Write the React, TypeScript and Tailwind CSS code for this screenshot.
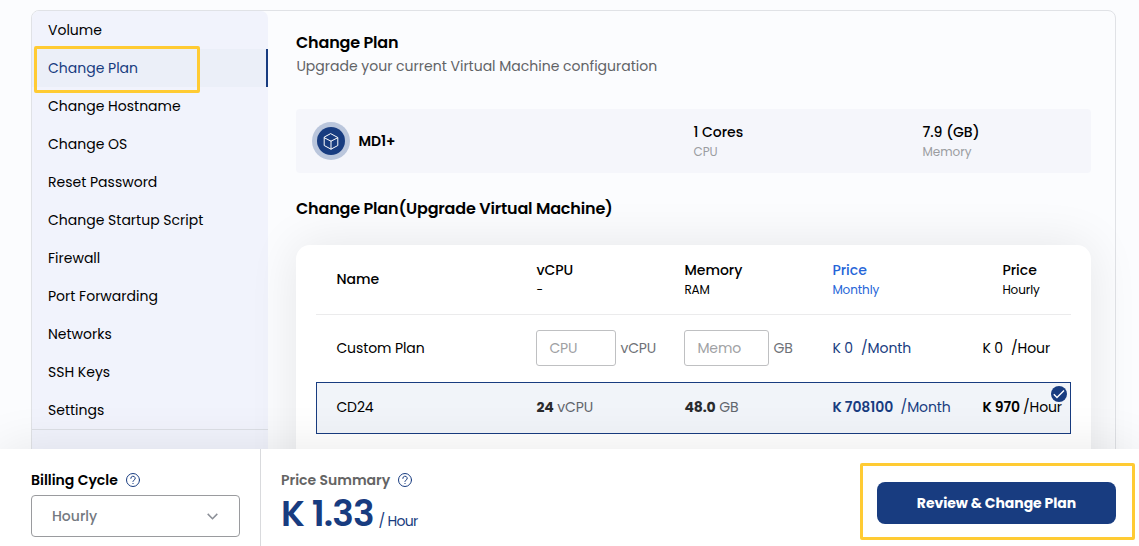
import React from "react";

const menu: string[] = [
  "Volume",
  "Change Plan",
  "Change Hostname",
  "Change OS",
  "Reset Password",
  "Change Startup Script",
  "Firewall",
  "Port Forwarding",
  "Networks",
  "SSH Keys",
  "Settings",
];

const columns = "grid grid-cols-[200px_148px_148px_150px_89px] pl-[20.4px]";

function HelpIcon() {
  return (
    <svg width="14" height="14" viewBox="0 0 14 14" fill="none" stroke="#183c80" strokeWidth="1" strokeLinecap="round">
      <circle cx="7" cy="7" r="6.5" />
      <path d="M4.8 5.4a2.2 2.1 0 1 1 3.2 1.8c-.7.35-1 .6-1 1.3" />
      <path d="M7 10.4v.2" />
    </svg>
  );
}

function CubeIcon() {
  return (
    <svg width="16" height="17" viewBox="0 0 16 17" fill="none" stroke="#fff" strokeWidth="1" strokeLinejoin="round" strokeLinecap="round">
      <path d="M8 .8 14.8 4.5v8L8 16.2 1.2 12.5v-8z" />
      <path d="M1.4 4.8 8 8.2l6.6-3.4M8 8.2v7.8" />
    </svg>
  );
}

function Sidebar() {
  return (
    <nav className="w-[236px] shrink-0 rounded-t-[7px] bg-[#f1f3fc]">
      <ul className="border-b border-[#dcdfe5]">
        {menu.map((label) => (
          <li
            key={label}
            className={
              label === "Change Plan"
                ? "flex h-[38px] items-center border-r-2 border-[#183c80] bg-[#ebeff8] pl-4 text-[#183c80]"
                : "flex h-[38px] items-center pl-4 text-black"
            }
          >
            {label}
          </li>
        ))}
      </ul>
    </nav>
  );
}

function CurrentPlan() {
  return (
    <div className="mt-8 grid h-16 grid-cols-[381px_229px_1fr] items-center rounded bg-[#f5f6fb] pl-4">
      <div className="flex items-center gap-[8.4px]">
        <span className="flex size-[38px] items-center justify-center rounded-full bg-[#bac6dc]">
          <span className="flex size-7 items-center justify-center rounded-full bg-[#183c80]">
            <CubeIcon />
          </span>
        </span>
        <span className="font-semibold">MD1+</span>
      </div>
      <div className="pt-0.5 pl-[0.4px]">
        <div className="h-5 font-medium leading-5">1 Cores</div>
        <div className="h-5 text-xs leading-5 text-[#9b9da1]">CPU</div>
      </div>
      <div className="pt-0.5 pl-[0.4px]">
        <div className="h-5 font-medium leading-5">7.9 (GB)</div>
        <div className="h-5 text-xs leading-5 text-[#9b9da1]">Memory</div>
      </div>
    </div>
  );
}

function HeadCell({ title, sub, className = "" }: { title: string; sub: string; className?: string }) {
  return (
    <div className={className}>
      <div className="h-5 font-medium leading-5">{title}</div>
      <div className="h-5 text-xs leading-5 tracking-[-0.1px]">{sub}</div>
    </div>
  );
}

function PlanTable() {
  return (
    <div className="mt-6 h-[300px] rounded-[14px] bg-white px-5 shadow-[0_0_50px_rgba(0,0,0,0.09)]">
      <div className={columns + " h-[70px] items-center border-b border-[#ebebec]"}>
        <div className="pb-0.5 font-medium">Name</div>
        <HeadCell title="vCPU" sub="-" />
        <HeadCell title="Memory" sub="RAM" />
        <HeadCell title="Price" sub="Monthly" className="text-[#2565d8]" />
        <HeadCell title="Price" sub="Hourly" className="pl-5" />
      </div>
      <div className={columns + " h-[67px] items-center pb-px tracking-[-0.1px]"}>
        <div>Custom Plan</div>
        <div className="flex items-center gap-1 text-[#6f7278]">
          <span className="flex h-9 w-20 items-center rounded-[3px] border border-[#bfc0c2] pl-3 text-[#a0a1a4]">CPU</span>
          vCPU
        </div>
        <div className="flex items-center gap-1 text-[#6f7278]">
          <span className="flex h-9 w-[85px] items-center rounded-[3px] border border-[#bfc0c2] pl-3 text-[#a0a1a4]">Memo</span>
          GB
        </div>
        <div className="flex gap-2 text-[#183c80]"><span>K 0</span><span>/Month</span></div>
        <div className="flex gap-2"><span>K 0</span><span>/Hour</span></div>
      </div>
      <div className="relative grid h-[52px] grid-cols-[200px_148px_148px_150px_87px] items-center border border-[#183c80] bg-[#f1f4f9] pb-0.5 pl-[19.4px] tracking-[-0.1px]">
        <div>CD24</div>
        <div className="text-[#62666d]"><b className="font-bold text-[#2a2b2e]">24</b> vCPU</div>
        <div className="text-[#62666d]"><b className="font-bold text-[#2a2b2e]">48.0</b> GB</div>
        <div className="flex gap-[7.5px] text-[#183c80]"><b className="font-semibold">K 708100</b><span>/Month</span></div>
        <div className="flex gap-[3px]"><b className="font-semibold">K 970</b><span>/Hour</span></div>
        <svg className="absolute right-[3px] top-[3px]" width="16" height="16" viewBox="0 0 16 16">
          <circle cx="8" cy="8" r="8" fill="#183c80" />
          <path d="m2.8 8.2 3.2 3.3 7-7.1" fill="none" stroke="#fff" strokeWidth="1.4" />
        </svg>
      </div>
    </div>
  );
}

function Footer() {
  return (
    <footer className="relative z-10 flex h-[97px] shrink-0 bg-white shadow-[0_0_50px_rgba(0,0,0,0.09)]">
      <div className="w-[261px] border-r border-[#d9dadd] pl-[31px] pt-5">
        <div className="flex h-[22px] items-center gap-2 font-semibold">
          <span>Billing Cycle</span>
          <HelpIcon />
        </div>
        <div className="mt-1 flex h-[42px] w-[209px] items-center justify-between rounded border border-[#9a9b9e] pl-5 pr-[21px] font-medium text-[#747981]">
          <span>Hourly</span>
          <svg width="11" height="7" viewBox="0 0 11 7" fill="none" stroke="#8b8f97" strokeWidth="1.5">
            <path d="m.7.9 4.8 4.8L10.3.9" />
          </svg>
        </div>
      </div>
      <div className="flex-1 pl-5 pt-5">
        <div className="flex h-[22px] items-center gap-2 font-semibold text-[#646464]">
          <span>Price Summary</span>
          <HelpIcon />
        </div>
        <div className="flex h-11 items-baseline gap-[5px] text-[#183c80]">
          <span className="text-[36px] font-semibold leading-[46px] tracking-[-0.9px]">K 1.33</span>
          <span className="text-[14px] tracking-[-0.7px]">/ Hour</span>
        </div>
      </div>
      <div className="pr-[23px] pt-[33px]">
        <button className="h-[42px] w-[239px] rounded-lg bg-[#183c80] font-bold tracking-[-0.06px] text-white">Review &amp; Change Plan</button>
      </div>
      <div className="pointer-events-none absolute left-[860px] top-[14px] h-[77px] w-[275px] rounded-[2px] border-3 border-[#ffcb33]" />
    </footer>
  );
}

export default function App() {
  return (
    <div className="relative flex h-[546px] w-[1139px] flex-col overflow-hidden bg-[#fbfcfe] font-['Poppins','Inter',sans-serif] text-sm text-black">
      <main className="min-h-0 flex-1 overflow-hidden pl-[31px] pr-[23px] pt-[10px]">
        <div className="flex h-[500px] rounded-t-lg border border-[#e0e2e6]">
          <Sidebar />
          <section className="min-w-0 flex-1 pl-7 pr-6 pt-5">
            <h1 className="h-6 text-base font-semibold leading-6 tracking-[-0.18px]">Change Plan</h1>
            <p className="h-[22px] pl-[0.4px] leading-[22px] text-[#616366]">Upgrade your current Virtual Machine configuration</p>
            <CurrentPlan />
            <h2 className="mt-6 h-6 text-base font-semibold leading-6 tracking-[-0.18px]">Change Plan(Upgrade Virtual Machine)</h2>
            <PlanTable />
          </section>
        </div>
      </main>
      <Footer />
      <div className="pointer-events-none absolute left-[34px] top-[46px] h-[47px] w-[166px] rounded-[2px] border-3 border-[#ffcb33]" />
    </div>
  );
}
